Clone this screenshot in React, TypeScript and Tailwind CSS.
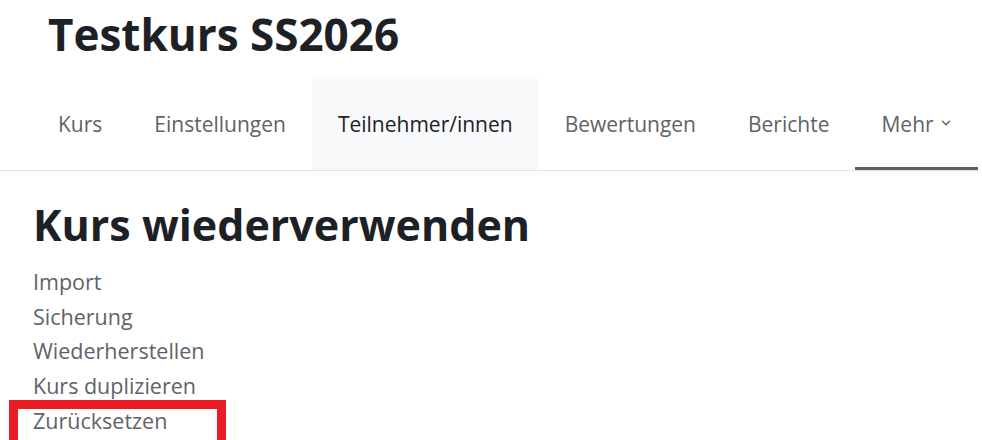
import { ChevronDown } from "lucide-react";

const tabs = [
  { label: "Kurs" },
  { label: "Einstellungen" },
  { label: "Teilnehmer/innen", active: true },
  { label: "Bewertungen" },
  { label: "Berichte" },
];

const links = ["Import", "Sicherung", "Wiederherstellen", "Kurs duplizieren", "Zurücksetzen"];

export default function App() {
  return (
    <div className="relative h-[440px] w-[982px] overflow-hidden bg-white font-['Open_Sans','Noto_Sans',sans-serif]">
      <header className="pl-[48px] pt-[4px]">
        <h1 className="text-[44px] font-bold leading-[60px] text-[#1d2125]">Testkurs SS2026</h1>
      </header>

      <nav className="mt-[15px] w-[978px] border-b border-[#dee2e6]">
        <ul className="flex h-[91px] pl-[32px]">
          {tabs.map((tab) => (
            <li key={tab.label}>
              <a
                href="#"
                className={
                  tab.active
                    ? "flex h-full items-center bg-[#f8f9fa] px-[26px] text-[21px] text-[#1d2125]"
                    : "flex h-full items-center px-[26px] text-[21px] text-[#5f6367]"
                }
              >
                {tab.label}
              </a>
            </li>
          ))}
          <li className="ml-auto w-[124px]">
            <a
              href="#"
              className="flex h-full items-center gap-[5px] border-b-[3px] border-[#5f5f5f] pt-[3px] pl-[26px] text-[21px] text-[#5f6367]"
            >
              Mehr
              <ChevronDown size={14} strokeWidth={2.5} className="mt-[-4px]" />
            </a>
          </li>
        </ul>
      </nav>

      <main className="px-[33px] pt-[26px]">
        <h2 className="text-[43px] font-bold leading-[56px] text-[#1d2125]">Kurs wiederverwenden</h2>
        <ul className="mt-[12px] flex flex-col">
          {links.map((link) => (
            <li key={link} className="h-[34.7px] text-[21.5px] leading-[34.7px] text-[#5f6367]">
              <a href="#">{link}</a>
            </li>
          ))}
        </ul>
      </main>

      <div className="pointer-events-none absolute left-[9px] top-[400px] h-[50px] w-[217px] border-[9.5px] border-[#ec1c24]" />
    </div>
  );
}
